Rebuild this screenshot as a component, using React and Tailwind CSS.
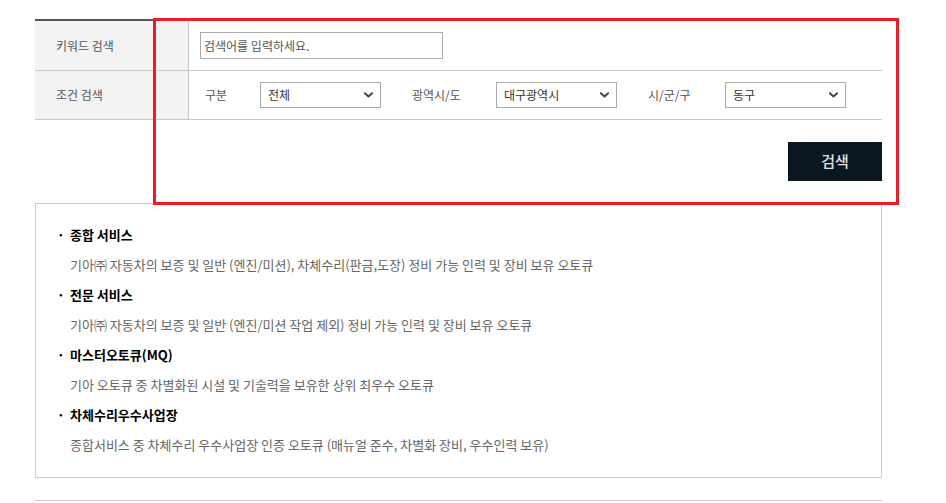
import React, { useState } from 'react'

const font = { fontFamily: '"Noto Sans CJK KR", "Noto Sans", sans-serif' }

const services = [
  {
    title: '종합 서비스',
    desc: '기아㈜ 자동차의 보증 및 일반 (엔진/미션), 차체수리(판금,도장) 정비 가능 인력 및 장비 보유 오토큐',
  },
  {
    title: '전문 서비스',
    desc: '기아㈜ 자동차의 보증 및 일반 (엔진/미션 작업 제외) 정비 가능 인력 및 장비 보유 오토큐',
  },
  {
    title: '마스터오토큐(MQ)',
    desc: '기아 오토큐 중 차별화된 시설 및 기술력을 보유한 상위 최우수 오토큐',
  },
  {
    title: '차체수리우수사업장',
    desc: '종합서비스 중 차체수리 우수사업장 인증 오토큐 (매뉴얼 준수, 차별화 장비, 우수인력 보유)',
  },
]

function Chevron() {
  return (
    <svg
      className="pointer-events-none absolute right-[8px] top-1/2 -translate-y-1/2 w-[9px] h-[6px] text-[#444]"
      viewBox="0 0 10 6"
      fill="none"
      stroke="currentColor"
    >
      <path d="M1 1l4 3.6L9 1" strokeWidth={2.2} strokeLinecap="round" strokeLinejoin="round" />
    </svg>
  )
}

function SelectBox({ value, options, onChange }) {
  return (
    <div className="relative w-[121px] h-[26px] shrink-0">
      <select
        value={value}
        onChange={(e) => onChange(e.target.value)}
        className="appearance-none w-full h-full border border-[#aaaaaa] bg-white pl-[7px] pr-[20px] text-[12px] text-[#333] outline-none"
        style={font}
      >
        {options.map((o) => (
          <option key={o}>{o}</option>
        ))}
      </select>
      <Chevron />
    </div>
  )
}

export default function App() {
  const [keyword, setKeyword] = useState('')
  const [type, setType] = useState('전체')
  const [city, setCity] = useState('대구광역시')
  const [district, setDistrict] = useState('동구')

  return (
    <div className="relative w-[946px] h-[503px] bg-white overflow-hidden" style={font}>
      <div className="ml-[35px] w-[847px] pt-[19px]">
        {/* search table */}
        <div className="border-t-2 border-[#555555]">
          <div className="flex h-[50px] border-b border-[#c8c8c8]">
            <div className="w-[154px] shrink-0 bg-[#f3f3f3] border-r border-[#c8c8c8] flex items-center pl-[21px] text-[12px] text-[#555]">
              키워드 검색
            </div>
            <div className="flex items-center pl-[11px]">
              <input
                value={keyword}
                onChange={(e) => setKeyword(e.target.value)}
                placeholder="검색어를 입력하세요."
                className="w-[243px] h-[27px] border border-[#aaaaaa] px-[3px] text-[12px] text-[#333] placeholder:text-[#555] outline-none"
                style={font}
              />
            </div>
          </div>
          <div className="flex h-[49px] border-b border-[#c8c8c8]">
            <div className="w-[154px] shrink-0 bg-[#f3f3f3] border-r border-[#c8c8c8] flex items-center pl-[21px] text-[12px] text-[#555]">
              조건 검색
            </div>
            <div className="flex items-center pl-[16px] text-[12px] text-[#555]">
              <span className="w-[55px] shrink-0">구분</span>
              <SelectBox value={type} onChange={setType} options={['전체', '종합 서비스', '전문 서비스']} />
              <span className="ml-[31px] w-[84px] shrink-0">광역시/도</span>
              <SelectBox value={city} onChange={setCity} options={['대구광역시', '서울특별시', '부산광역시']} />
              <span className="ml-[31px] w-[77px] shrink-0">시/군/구</span>
              <SelectBox value={district} onChange={setDistrict} options={['동구', '중구', '서구', '남구', '북구']} />
            </div>
          </div>
        </div>

        <div className="flex justify-end pt-[22px]">
          <button className="w-[94px] h-[39px] bg-[#0a1620] text-[15px] font-medium text-[#e2e2e2]" style={font}>
            검색
          </button>
        </div>

        {/* service legend */}
        <div className="mt-[22px] border border-[#cccccc] pt-[21px] pb-[22px] pl-[21px]">
          <ul className="flex flex-col gap-[10px]">
            {services.map((s) => (
              <li key={s.title}>
                <div className="flex items-center h-[20px] text-[13px] font-bold text-black">
                  <span className="w-[13px]">·</span>
                  <span>{s.title}</span>
                </div>
                <p className="mt-[10px] pl-[13px] h-[20px] leading-[20px] text-[13px] text-[#666]">{s.desc}</p>
              </li>
            ))}
          </ul>
        </div>

        <div className="mt-[22px] border-t border-[#cccccc]" />
      </div>

      {/* highlight annotation */}
      <div className="absolute left-[153px] top-[18px] w-[746px] h-[187px] border-[3px] border-[#ed1c24] pointer-events-none" />
    </div>
  )
}
